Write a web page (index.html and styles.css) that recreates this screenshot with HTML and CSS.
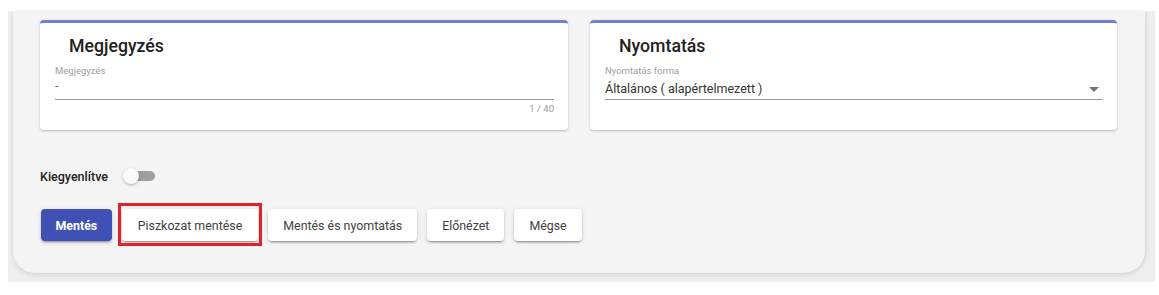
FILE: index.html
```html
<!DOCTYPE html>
<html lang="hu">
<head>
<meta charset="utf-8">
<title>Megjegyzés</title>
<link rel="stylesheet" href="styles.css">
</head>
<body>
<div class="outer">
  <div class="panel">
    <div class="cards">
      <section class="card">
        <h2 class="card-title">Megjegyzés</h2>
        <div class="field">
          <div class="field-label">Megjegyzés</div>
          <div class="field-input"><span class="dash">-</span></div>
          <div class="counter">1 / 40</div>
        </div>
      </section>
      <section class="card">
        <h2 class="card-title">Nyomtatás</h2>
        <div class="field">
          <div class="field-label">Nyomtatás forma</div>
          <div class="field-input select">
            <span class="value">Általános ( alapértelmezett )</span>
            <span class="arrow"></span>
          </div>
        </div>
      </section>
    </div>
    <div class="toggle-row">
      <span class="toggle-label">Kiegyenlítve</span>
      <span class="toggle"><span class="track"></span><span class="thumb"></span></span>
    </div>
    <div class="actions">
      <button class="btn primary">Mentés</button>
      <button class="btn highlighted">Piszkozat mentése</button>
      <button class="btn">Mentés és nyomtatás</button>
      <button class="btn">Előnézet</button>
      <button class="btn">Mégse</button>
    </div>
  </div>
</div>
</body>
</html>
```

FILE: styles.css
```css
* { box-sizing: border-box; }
html, body { margin: 0; padding: 0; background: #ffffff; }
body { font-family: Roboto, "Liberation Sans", Arial, sans-serif; color: #212121; }

.outer {
  margin: 11px 0 0 8px;
  width: 1147px;
  height: 271px;
  background: #eeeeee;
  padding: 0 10px 9px 5px;
}

.panel {
  height: 262px;
  background: #f4f4f4;
  border-radius: 0 0 22px 22px;
  box-shadow: 0 2px 5px rgba(0,0,0,0.10), 1px 0 3px rgba(0,0,0,0.04);
  padding: 9px 28px 0 27px;
}

.cards {
  display: grid;
  grid-template-columns: 528px 527px;
  column-gap: 22px;
}

.card {
  height: 110px;
  background: #ffffff;
  border-top: 3px solid #7280d2;
  border-radius: 4px;
  box-shadow: 0 1px 3px rgba(0,0,0,0.18), 0 1px 1px rgba(0,0,0,0.06);
  padding: 13px 14px 0 15px;
}

.card-title {
  margin: 0 0 9px 14px;
  font-size: 17.7px;
  line-height: 20px;
  font-weight: 500;
  color: #212121;
}

.field-label {
  font-size: 9.5px;
  line-height: 12px;
  color: #a0a0a0;
}

.field-input {
  margin-top: 3px;
  height: 20px;
  padding-bottom: 1px;
  border-bottom: 1px solid #9a9a9a;
  display: flex;
  align-items: center;
  font-size: 12.5px;
  line-height: 18px;
  color: #333333;
}

.dash { color: #777777; font-size: 13px; margin-top: -6px; }

.select { justify-content: space-between; padding-right: 4px; }

.arrow {
  width: 0;
  height: 0;
  border-left: 5px solid transparent;
  border-right: 5px solid transparent;
  border-top: 5px solid #757575;
  margin-top: 1px;
}

.counter {
  margin-top: 3px;
  text-align: right;
  font-size: 9.5px;
  line-height: 12px;
  color: #9e9e9e;
}

.toggle-row {
  margin-top: 36px;
  height: 20px;
  display: flex;
  align-items: center;
  gap: 15px;
}

.toggle-label {
  font-size: 12.5px;
  font-weight: 500;
  color: #212121;
}

.toggle {
  position: relative;
  width: 32px;
  height: 16px;
  display: flex;
  align-items: center;
}

.track {
  margin-left: 4px;
  width: 28px;
  height: 10px;
  border-radius: 5px;
  background: #9e9e9e;
}

.thumb {
  position: absolute;
  left: 0;
  top: 0;
  width: 16px;
  height: 16px;
  border-radius: 50%;
  background: #fafafa;
  box-shadow: 0 1px 3px rgba(0,0,0,0.3);
}

.actions {
  margin-top: 23px;
  margin-left: 1px;
  display: flex;
  gap: 10px;
}

.btn {
  height: 32px;
  padding: 0 15px;
  border: none;
  border-radius: 4px;
  background: #ffffff;
  color: #424242;
  font-family: Roboto, "Liberation Sans", Arial, sans-serif;
  font-size: 12.4px;
  font-weight: 400;
  box-shadow: 0 3px 1px -2px rgba(0,0,0,0.2), 0 2px 2px 0 rgba(0,0,0,0.14), 0 1px 5px 0 rgba(0,0,0,0.12);
}

.btn.primary {
  background: #3f51b5;
  color: #ffffff;
  font-weight: 700;
  padding: 0 14.5px;
}

.btn.highlighted { position: relative; padding: 0 16px; }
.btn.highlighted::after {
  content: "";
  position: absolute;
  left: -4px;
  right: -4px;
  top: -6px;
  bottom: -5px;
  border: 3px solid #e3202b;
}
```
